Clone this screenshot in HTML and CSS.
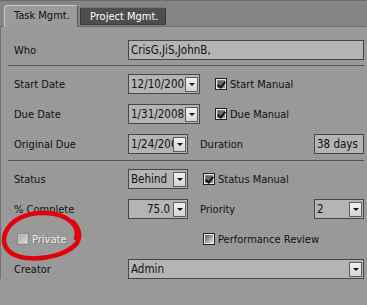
FILE: index.html
```html
<!DOCTYPE html>
<html lang="en">
<head>
    <meta charset="UTF-8" />
    <title>Task Details</title>
    <link rel="stylesheet" href="styles.css">
</head>
<body>

<div class="tabs">
    <div class="tab active">Task Mgmt.</div>
    <div class="tab">Project Mgmt.</div>
</div>

<div class="panel">
    <div class="row">
        <span class="label">Who</span>
        <div class="field wide"><span class="value">CrisG,JiS,JohnB,</span></div>
    </div>

    <div class="sep"></div>

    <div class="group">
        <div class="row">
            <span class="label">Start Date</span>
            <div class="field date"><span class="value">12/10/2007</span><span class="drop"></span></div>
            <label class="check"><span class="box checked"></span>Start Manual</label>
        </div>
        <div class="row">
            <span class="label">Due Date</span>
            <div class="field date"><span class="value">1/31/2008</span><span class="drop"></span></div>
            <label class="check"><span class="box checked"></span>Due Manual</label>
        </div>
        <div class="row">
            <span class="label">Original Due</span>
            <div class="field short"><span class="value">1/24/2008</span><span class="drop"></span></div>
            <span class="label side">Duration</span>
            <div class="field small"><span class="value">38 days</span></div>
        </div>
    </div>

    <div class="sep second"></div>

    <div class="group">
        <div class="row">
            <span class="label">Status</span>
            <div class="field short"><span class="value">Behind</span><span class="drop"></span></div>
            <label class="check"><span class="box checked"></span>Status Manual</label>
        </div>
        <div class="row">
            <span class="label">% Complete</span>
            <div class="field short"><span class="value num">75.0</span><span class="drop"></span></div>
            <span class="label side">Priority</span>
            <div class="field small"><span class="value">2</span><span class="drop"></span></div>
        </div>
        <div class="row">
            <div class="cell">
                <label class="check disabled"><span class="box"></span>Private</label>
            </div>
            <label class="check flat"><span class="box"></span>Performance Review</label>
        </div>
        <div class="row">
            <span class="label">Creator</span>
            <div class="field wide"><span class="value">Admin</span><span class="drop"></span></div>
        </div>
    </div>
</div>

<svg class="circle" width="86" height="56" viewBox="0 0 86 56">
    <path d="M76 32 C80 20 68 8 46 7 C28 6 10 13 5 28 C1 40 9 50 26 52 C46 54 68 48 77 37 C81 30 79 22 73 16"
          fill="none" stroke="#e3000b" stroke-width="4.5" stroke-linecap="round"/>
</svg>

</body>
</html>
```

FILE: styles.css
```css
body {
  margin: 0;
  width: 367px;
  height: 305px;
  overflow: hidden;
  position: relative;
  background-color: #999999;
  font-family: "DejaVu Sans Condensed", "DejaVu Sans", sans-serif;
  font-stretch: condensed;
  font-size: 11px;
  color: #111;
}

.tabs {
  height: 27px;
  box-sizing: border-box;
  background-color: #858585;
  border-top: 1px solid #6c6c6c;
  border-bottom: 1px solid #6c6c6c;
  display: flex;
  align-items: flex-end;
  padding-left: 4px;
  gap: 2px;
}

.tab {
  box-sizing: border-box;
  border-radius: 3px 3px 0 0;
  padding-left: 9px;
  display: flex;
  align-items: center;
}

.tab.active {
  width: 74px;
  height: 22px;
  margin-bottom: -1px;
  background-color: #9b9b9b;
  border: 1px solid #c9c9c9;
  border-right-color: #5a5a5a;
  border-bottom: none;
  padding-bottom: 2px;
}

.tab:not(.active) {
  width: 86px;
  height: 18px;
  margin-bottom: 1px;
  background-color: #4e4e4e;
  border: 1px solid #3a3a3a;
  border-top-color: #777;
  color: #fff;
}

.panel {
  border-left: 1px solid #727272;
  padding: 13px 3px 0 13px;
}

.row {
  display: flex;
  align-items: center;
  height: 20px;
}

.group {
  display: flex;
  flex-direction: column;
  gap: 10px;
}

.label {
  width: 114px;
  flex: none;
}

.label.side {
  width: auto;
  flex: 1;
  margin-left: 12px;
}

.sep {
  height: 1px;
  background-color: #545454;
  margin: 5px 0 8px -6px;
}

.sep.second {
  margin-top: 6px;
}

.field {
  height: 20px;
  box-sizing: border-box;
  border: 1px solid #474747;
  background-color: #b4b4b4;
  display: flex;
  align-items: center;
  padding-left: 2px;
  font-size: 11.5px;
  flex: none;
}

.field.wide {
  flex: 1;
}

.field.date {
  width: 72px;
}

.field.short {
  width: 60px;
}

.field.small {
  width: 50px;
}

.value {
  flex: 1;
  overflow: hidden;
  white-space: nowrap;
}

.value.num {
  text-align: right;
  padding-right: 3px;
}

.drop {
  width: 13px;
  height: 15px;
  box-sizing: border-box;
  margin-right: 1px;
  flex: none;
  background: linear-gradient(#f2f2f2, #d4d4d4);
  border: 1px solid #5c5c5c;
  display: flex;
  align-items: center;
  justify-content: center;
}

.drop::after {
  content: "";
  border-left: 3px solid transparent;
  border-right: 3px solid transparent;
  border-top: 3px solid #111;
  margin-top: 1px;
}

.check {
  display: flex;
  align-items: center;
  gap: 3px;
  margin-left: 15px;
}

.check.flat {
  margin-left: 0;
}

.cell {
  width: 189px;
  flex: none;
}

.cell .check {
  margin-left: 3px;
}

.box {
  width: 12px;
  height: 12px;
  box-sizing: border-box;
  border: 1px solid #222;
  box-shadow: inset 0 0 0 1px #e8e8e8;
  background: linear-gradient(135deg, #4a4a4a, #f4f4f4);
  display: inline-block;
}

.box.checked {
  background: linear-gradient(135deg, #5a5a5a, #9a9a9a) 2px 2px / 8px 8px no-repeat;
  background-color: #888;
  position: relative;
}

.box.checked::after {
  content: "";
  position: absolute;
  left: 3px;
  top: 1px;
  width: 3px;
  height: 6px;
  border: solid #111;
  border-width: 0 2px 2px 0;
  transform: rotate(40deg);
}

.check.disabled {
  color: #e9e9e9;
  text-shadow: 1px 1px 0 #808080;
}

.check.disabled .box {
  border-color: #8a8a8a;
  box-shadow: inset 0 0 0 1px #c0c0c0;
  background: linear-gradient(135deg, #a5a5a5, #e2e2e2);
}

.circle {
  position: absolute;
  left: 0;
  top: 206px;
}
```
